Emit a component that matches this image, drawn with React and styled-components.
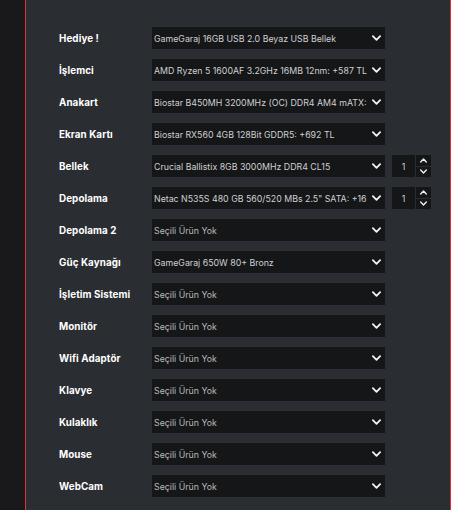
import React from "react";
import styled, { createGlobalStyle } from "styled-components";

const Global = createGlobalStyle`
  html, body { margin: 0; padding: 0; background: #19191c; }
  body { font-family: "Inter", "Noto Sans", sans-serif; }
`;

const Page = styled.div`
  display: flex;
  width: 451px;
  height: 510px;
  overflow: hidden;
  background: #19191c;
`;

const Side = styled.div`
  width: 25px;
  flex: none;
`;

const Panel = styled.div`
  flex: 1;
  background: #2a2d32;
  border-left: 1px solid #e0322f;
  border-right: 1px solid #e0322f;
  padding: 27px 0 0 33px;
  display: flex;
  flex-direction: column;
  gap: 10px;
`;

const Row = styled.div`
  display: flex;
  align-items: center;
  height: 22px;
`;

const Label = styled.div`
  width: 93px;
  flex: none;
  color: #ffffff;
  font-weight: 700;
  font-size: 9.8px;
  letter-spacing: 0.1px;
`;

const Select = styled.div`
  width: 233px;
  height: 22px;
  box-sizing: border-box;
  background: #151618;
  display: flex;
  align-items: center;
  padding: 0 4px 0 2px;
  gap: 2px;
`;

const SelectText = styled.span`
  flex: 1;
  min-width: 0;
  white-space: nowrap;
  overflow: hidden;
  color: ${(p) => (p.$empty ? "#b9b9b9" : "#d0d0d0")};
  font-size: 8.8px;
`;

const Qty = styled.div`
  display: flex;
  margin-left: 7px;
  gap: 1px;
`;

const QtyBox = styled.div`
  width: 23px;
  height: 22px;
  background: #151618;
  color: #d0d0d0;
  font-size: 8.8px;
  display: flex;
  align-items: center;
  justify-content: center;
`;

const Spin = styled.div`
  display: flex;
  flex-direction: column;
  gap: 1px;
`;

const SpinBtn = styled.div`
  width: 15px;
  height: 10.5px;
  background: #151618;
  display: flex;
  align-items: center;
  justify-content: center;
`;

const Chevron = ({ up, w = 9, h = 6 }) => (
  <svg width={w} height={h} viewBox="0 0 10 6" style={{ flex: "none" }}>
    <path
      d={up ? "M1 5 L5 1 L9 5" : "M1 1 L5 5 L9 1"}
      fill="none"
      stroke="#f2f2f2"
      strokeWidth="2"
      strokeLinecap="round"
      strokeLinejoin="round"
    />
  </svg>
);

const rows = [
  ["Hediye !", "GameGaraj 16GB USB 2.0 Beyaz USB Bellek"],
  ["İşlemci", "AMD Ryzen 5 1600AF 3.2GHz 16MB 12nm: +587 TL"],
  ["Anakart", "Biostar B450MH 3200MHz (OC) DDR4 AM4 mATX:"],
  ["Ekran Kartı", "Biostar RX560 4GB 128Bit GDDR5: +692 TL"],
  ["Bellek", "Crucial Ballistix 8GB 3000MHz DDR4 CL15", true],
  ["Depolama", "Netac N535S 480 GB 560/520 MBs 2.5\" SATA: +16", true],
  ["Depolama 2", null],
  ["Güç Kaynağı", "GameGaraj 650W 80+ Bronz"],
  ["İşletim Sistemi", null],
  ["Monitör", null],
  ["Wifi Adaptör", null],
  ["Klavye", null],
  ["Kulaklık", null],
  ["Mouse", null],
  ["WebCam", null],
];

export default function App() {
  return (
    <Page>
      <Global />
      <Side />
      <Panel>
        {rows.map(([label, value, qty]) => (
          <Row key={label}>
            <Label>{label}</Label>
            <Select>
              <SelectText $empty={!value}>{value || "Seçili Ürün Yok"}</SelectText>
              <Chevron />
            </Select>
            {qty && (
              <Qty>
                <QtyBox>1</QtyBox>
                <Spin>
                  <SpinBtn>
                    <Chevron up w={7} h={5} />
                  </SpinBtn>
                  <SpinBtn>
                    <Chevron w={7} h={5} />
                  </SpinBtn>
                </Spin>
              </Qty>
            )}
          </Row>
        ))}
      </Panel>
    </Page>
  );
}
